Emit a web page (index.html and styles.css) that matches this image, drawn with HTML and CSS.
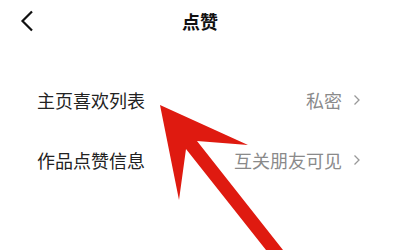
FILE: index.html
```html
<!DOCTYPE html>
<html lang="zh-CN">
<head>
<meta charset="utf-8">
<link rel="stylesheet" href="styles.css">
</head>
<body>
<div class="page">
  <header class="nav">
    <div class="nav-left">
      <svg class="back" width="14" height="22" viewBox="0 0 14 22"><polyline points="12,1.5 2.5,11 12,20.5" fill="none" stroke="#111" stroke-width="2.2" stroke-linejoin="miter"/></svg>
    </div>
    <div class="title">点赞</div>
    <div class="nav-right"></div>
  </header>
  <ul class="list">
    <li class="row">
      <span class="label">主页喜欢列表</span>
      <span class="value">私密<svg class="chev" width="8" height="12" viewBox="0 0 8 12"><polyline points="1.5,1.5 6,6 1.5,10.5" fill="none" stroke="#999" stroke-width="1.3"/></svg></span>
    </li>
    <li class="row">
      <span class="label">作品点赞信息</span>
      <span class="value">互关朋友可见<svg class="chev" width="8" height="12" viewBox="0 0 8 12"><polyline points="1.5,1.5 6,6 1.5,10.5" fill="none" stroke="#999" stroke-width="1.3"/></svg></span>
    </li>
  </ul>
  <svg class="arrow" width="400" height="250" viewBox="0 0 400 250">
    <polygon points="160,105 248,145 197,141 283,250 266,250 186,149 179,200" fill="#df1a10"/>
  </svg>
</div>
</body>
</html>
```
FILE: styles.css
```css
html, body {
  margin: 0;
  padding: 0;
  background: #fff;
}
.page {
  position: relative;
  width: 400px;
  height: 250px;
  overflow: hidden;
  font-family: "Noto Sans CJK SC", "Noto Sans", sans-serif;
}
.nav {
  display: grid;
  grid-template-columns: 1fr auto 1fr;
  align-items: center;
  height: 42px;
  padding: 0 20px;
}
.nav-left {
  display: flex;
  align-items: center;
}
.back {
  display: block;
}
.title {
  font-size: 18px;
  font-weight: 700;
  color: #111;
  line-height: 1;
}
.list {
  list-style: none;
  margin: 28px 0 0;
  padding: 0 39px 0 37px;
}
.row {
  display: flex;
  align-items: center;
  justify-content: space-between;
  height: 60px;
}
.label {
  font-size: 18px;
  color: #222;
  line-height: 1;
}
.value {
  display: flex;
  align-items: center;
  gap: 11px;
  font-size: 18px;
  color: #8a8a8a;
  line-height: 1;
}
.chev {
  display: block;
}
.arrow {
  position: absolute;
  left: 0;
  top: 0;
}
```
